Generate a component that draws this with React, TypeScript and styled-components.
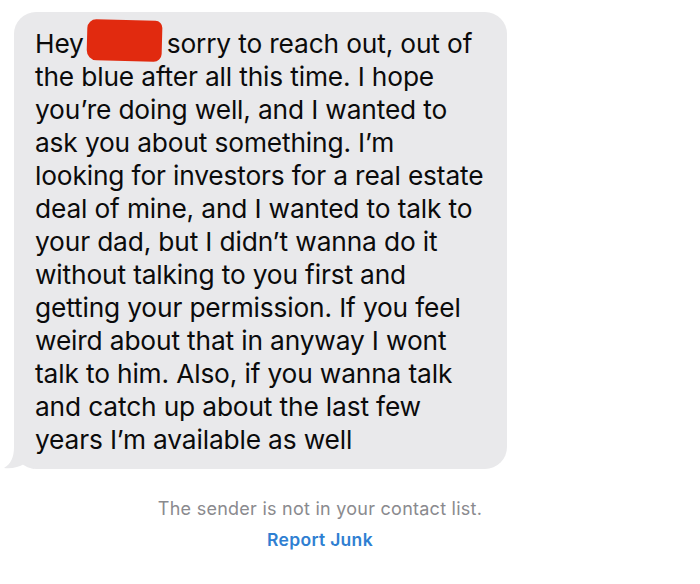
import React from "react";
import styled, { createGlobalStyle } from "styled-components";

const GlobalStyle = createGlobalStyle`
  html, body {
    margin: 0;
    padding: 0;
    background: #ffffff;
  }
`;

const Page = styled.div`
  width: 700px;
  height: 584px;
  display: flex;
  flex-direction: column;
  font-family: Inter, "Noto Sans", sans-serif;
  overflow: hidden;
`;

const Thread = styled.div`
  display: flex;
  padding: 12px 0 0 14px;
`;

const Bubble = styled.div`
  position: relative;
  width: 493px;
  box-sizing: border-box;
  padding: 15px 10px 13px 21px;
  background: #e9e9eb;
  border-radius: 22px;
  color: #0b0b0b;
  font-size: 26.3px;
  line-height: 33px;
  letter-spacing: -0.15px;
  white-space: pre-line;
`;

const Tail = styled.svg`
  position: absolute;
  left: -10px;
  bottom: 0;
  width: 30px;
  height: 22px;
`;

// the blob is taller than a line, negative margins keep the line box at 33px
const Redacted = styled.span`
  display: inline-block;
  width: 75px;
  height: 41px;
  margin: -14px 5px -4px 3px;
  vertical-align: -4px;
  background: #e12a0f;
  border-radius: 9px 7px 8px 10px;
  transform: rotate(1.5deg);
`;

const Footer = styled.div`
  width: 640px;
  display: flex;
  flex-direction: column;
  align-items: center;
  gap: 10px;
  padding-top: 29px;
  font-size: 18px;
`;

const Notice = styled.div`
  color: #8a8a8e;
  letter-spacing: 0.25px;
`;

const ReportLink = styled.a`
  color: #2f7fd2;
  font-weight: 600;
  font-size: 17.5px;
  text-decoration: none;
  letter-spacing: 0.3px;
`;

const lines = `sorry to reach out, out of
the blue after all this time. I hope
you’re doing well, and I wanted to
ask you about something. I’m
looking for investors for a real estate
deal of mine, and I wanted to talk to
your dad, but I didn’t wanna do it
without talking to you first and
getting your permission. If you feel
weird about that in anyway I wont
talk to him. Also, if you wanna talk
and catch up about the last few
years I’m available as well`;

export default function App() {
  return (
    <Page>
      <GlobalStyle />
      <Thread>
        <Bubble>
          <Tail viewBox="0 0 30 22">
            <path d="M10 0 C10 10 7 17 0 21 C8 22 15 20 20 17 L30 22 L30 0 Z" fill="#e9e9eb" />
          </Tail>
          Hey<Redacted />{lines}
        </Bubble>
      </Thread>
      <Footer>
        <Notice>The sender is not in your contact list.</Notice>
        <ReportLink href="#">Report Junk</ReportLink>
      </Footer>
    </Page>
  );
}
